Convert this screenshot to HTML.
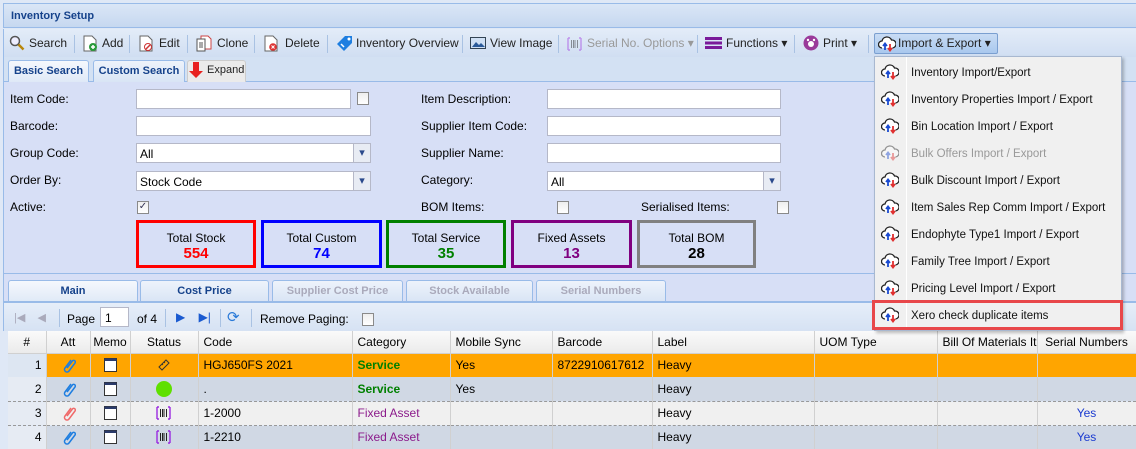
<!DOCTYPE html>
<html><head><meta charset="utf-8"><style>
*{box-sizing:border-box;margin:0;padding:0}
body{width:1136px;height:446px;overflow:hidden;background:#dfe8f6;font-family:"Liberation Sans",sans-serif;font-size:12px;color:#000;position:relative}
.a{position:absolute}
.title{left:3px;top:3px;width:1133px;height:25px;background:linear-gradient(#dae6f6,#c6d8f0);border:1px solid #99bbe8;border-right:none}
.title span{position:absolute;left:7px;top:6px;font-weight:bold;color:#15428b;font-size:11px}
.tb{left:3px;top:29px;width:1133px;height:28px;background:linear-gradient(#e3ecf8,#d0def2);border-left:1px solid #99bbe8}
.btn{position:absolute;top:36px;font-size:12px;color:#222;white-space:nowrap}
.sep{position:absolute;top:35px;width:1px;height:18px;background:#a9c2e3}
.tabs{left:3px;top:57px;width:1133px;height:25px;background:#d3e1f3;border-left:1px solid #99bbe8;border-bottom:1px solid #99bbe8}
.tab{position:absolute;height:22px;border:1px solid #99bbe8;border-bottom:none;border-radius:3px 3px 0 0;font-weight:bold;font-size:11px;color:#15428b;text-align:center;line-height:21px;background:linear-gradient(#eef3fb,#d9e5f5)}
.form{left:3px;top:82px;width:1133px;height:192px;background:#d7dff6;border-left:1px solid #99bbe8;border-bottom:1px solid #99bbe8}
.lbl{position:absolute;font-size:12px;color:#000}
.inp{position:absolute;height:20px;background:#fff;border:1px solid #b5b8c8;font-size:12px;padding:3px 3px}
.sel:after{content:"▾";position:absolute;right:0;top:0;width:16px;height:18px;background:#e8ecf4;border-left:1px solid #b5b8c8;color:#2a4a8c;font-size:11px;text-align:center;line-height:18px}
.cb{position:absolute;width:12px;height:13px;border:1px solid #8a8a8a;background:linear-gradient(#eee,#fff)}
.box{position:absolute;top:220px;height:48px;border:3px solid;background:#d7dff6;text-align:center;font-size:12px;padding-top:8px;line-height:15px}
.box b{display:block;font-size:15px;font-weight:bold}
.gtabs{left:3px;top:274px;width:1133px;height:28px;background:#d7dff6;border-left:1px solid #99bbe8}
.gt{position:absolute;top:280px;height:21px;border:1px solid #99bbe8;border-bottom:none;border-radius:3px 3px 0 0;font-weight:bold;font-size:11px;text-align:center;line-height:20px;background:linear-gradient(#eef3fb,#dae5f5);color:#15428b}
.pg{left:3px;top:301px;width:1133px;height:30px;background:linear-gradient(#e6eef9,#d6e2f3);border-left:1px solid #99bbe8;border-top:2px solid #99bbe8}
table{position:absolute;left:8px;top:331px;border-collapse:collapse;table-layout:fixed;width:1128px;font-size:12px}
th{height:22px;font-weight:normal;background:linear-gradient(#fafafa,#ebebeb);border-right:1px solid #d0d0d0;border-bottom:1px solid #d0d0d0;text-align:left;padding-left:5px;white-space:nowrap;overflow:hidden}
td{height:24px;border-right:1px solid #d0d0d0;padding-left:5px;white-space:nowrap;overflow:hidden}
tr.r1 td{background:#ffa500}
tr.r2 td{background:#d0d8e4}
tr.r3 td{background:#f0f0f0;border-top:1px dashed #999}
tr.r4 td{background:#d0d8e4;border-top:1px dashed #999}
td.n{text-align:right;padding-right:4px;background:#e6ebf3!important}
tr.r1 td.n{background:#dde6f2!important}
.c{text-align:center;padding-left:0}
.c svg{vertical-align:middle}
.svc{color:#008000;font-weight:bold}
.fa{color:#8b1a8b}
.menu{left:874px;top:56px;width:248px;height:275px;background:#f0f0f0;border:1px solid #a8b8d0;box-shadow:2px 2px 3px rgba(0,0,0,.25)}
.menu .ln{position:absolute;left:31px;top:0;width:1px;height:100%;background:#e0e0e0;border-right:1px solid #fff}
.mi{position:absolute;left:36px;font-size:11.5px;color:#111}
.mic{position:absolute;left:6px}
</style></head><body>
<svg width="0" height="0" style="position:absolute"><defs>
<g id="cl"><path d="M4 12a3.5 3.5 0 0 1 0-7a5 5 0 0 1 9.5-1a4 4 0 0 1 1 8" fill="#fff" stroke="#222" stroke-width="1.3"/><path d="M7 14V8M5 10l2-2.5L9 10" stroke="#1a4ad0" stroke-width="1.8" fill="none"/><path d="M12 8v6M10 12l2 2.5 2-2.5" stroke="#e03030" stroke-width="1.8" fill="none"/></g>
<g id="clip"><path d="M11 3L5 11a2.5 2.5 0 0 0 4 3l6-8a1.6 1.6 0 0 0-2.6-2L7 11" fill="none" stroke-width="1.5"/></g>
<g id="memo"><rect x="1.5" y="1.5" width="12" height="13" fill="#fff" stroke="#333"/><rect x="1.5" y="1.5" width="12" height="2.5" fill="#2a3a6a"/></g>
<g id="bar"><path d="M1 2v12M14 2v12M1 2h2M1 14h2M14 2h-2M14 14h-2" stroke="#9a2ae0" stroke-width="1.4" fill="none"/><path d="M4.5 4v8M6.5 4v8M8 4v8M10.5 4v8" stroke="#222"/></g>
</defs></svg>
<div class="a title"><span>Inventory Setup</span></div>
<div class="a tb"></div>
<svg class="a" style="left:9px;top:35px" width="16" height="16"><circle cx="6" cy="6" r="4.5" fill="#eef" stroke="#555" stroke-width="1.5"/><path d="M9.5 9.5l5 5" stroke="#b8860b" stroke-width="2.5"/></svg>
<div class="btn" style="left:29px">Search</div><div class="sep" style="left:74px"></div>
<svg class="a" style="left:82px;top:35px" width="16" height="17"><path d="M2 1h8l4 4v11H2z" fill="#fff" stroke="#666"/><circle cx="11" cy="12" r="4" fill="#2a9a3a"/><path d="M9 12h4M11 10v4" stroke="#fff" stroke-width="1.5"/></svg>
<div class="btn" style="left:102px">Add</div><div class="sep" style="left:129px"></div>
<svg class="a" style="left:138px;top:35px" width="16" height="17"><path d="M2 1h8l4 4v11H2z" fill="#fff" stroke="#666"/><circle cx="10" cy="12" r="3.5" fill="none" stroke="#c33"/><path d="M8 14l4-4" stroke="#c33" stroke-width="1.5"/></svg>
<div class="btn" style="left:159px">Edit</div><div class="sep" style="left:187px"></div>
<svg class="a" style="left:196px;top:35px" width="16" height="17"><path d="M5 1h7l3 3v10H5z" fill="#fff" stroke="#c44"/><path d="M1 4h8v12H1z" fill="#fff" stroke="#555"/><path d="M3 8h4M3 10h4M3 12h4" stroke="#555"/></svg>
<div class="btn" style="left:217px">Clone</div><div class="sep" style="left:254px"></div>
<svg class="a" style="left:263px;top:35px" width="16" height="17"><path d="M2 1h8l4 4v11H2z" fill="#fff" stroke="#666"/><circle cx="10" cy="12" r="3.8" fill="#d33"/><path d="M8.5 10.5l3 3M11.5 10.5l-3 3" stroke="#fff"/></svg>
<div class="btn" style="left:285px">Delete</div><div class="sep" style="left:327px"></div>
<svg class="a" style="left:336px;top:35px" width="17" height="17"><path d="M9 1h7v7L8 16 1 9z" fill="#1e7ee0"/><circle cx="13" cy="4" r="1.5" fill="#fff"/><path d="M5 9l3 3" stroke="#fff" stroke-width="1.5"/></svg>
<div class="btn" style="left:356px">Inventory Overview</div><div class="sep" style="left:462px"></div>
<svg class="a" style="left:470px;top:37px" width="17" height="13"><rect x=".5" y=".5" width="15" height="11" fill="#cfe0f5" stroke="#345"/><path d="M2 10l4-5 3 3 2-2 4 4z" fill="#2a5a9a"/></svg>
<div class="btn" style="left:490px">View Image</div><div class="sep" style="left:558px"></div>
<svg class="a" style="left:567px;top:36px" width="16" height="16" opacity=".45"><use href="#bar"/></svg>
<div class="btn" style="left:587px;color:#999">Serial No. Options ▾</div><div class="sep" style="left:697px"></div>
<svg class="a" style="left:705px;top:37px" width="17" height="12"><rect y="0" width="17" height="3" fill="#7a1a9a"/><rect y="4.5" width="17" height="3" fill="#7a1a9a"/><rect y="9" width="17" height="3" fill="#7a1a9a"/></svg>
<div class="btn" style="left:726px">Functions ▾</div><div class="sep" style="left:794px"></div>
<svg class="a" style="left:803px;top:35px" width="16" height="16"><circle cx="8" cy="8" r="7.5" fill="#9a3a9a"/><circle cx="8" cy="9" r="3" fill="#fff"/><circle cx="5" cy="5" r="1.2" fill="#fff"/><circle cx="11" cy="5" r="1.2" fill="#fff"/></svg>
<div class="btn" style="left:823px">Print ▾</div><div class="sep" style="left:868px"></div>
<div class="a" style="left:874px;top:33px;width:124px;height:21px;border:1px solid #7a9fd0;border-radius:2px;background:linear-gradient(#c8dcf4,#a9c8ee)"></div>
<svg class="a" style="left:878px;top:36px" width="18" height="16"><use href="#cl"/></svg>
<div class="btn" style="left:898px">Import &amp; Export ▾</div>

<div class="a tabs"></div>
<div class="tab" style="left:8px;top:60px;width:81px;background:linear-gradient(#f5f8fd,#dfe9f7)">Basic Search</div>
<div class="tab" style="left:93px;top:60px;width:92px">Custom Search</div>
<div class="tab" style="left:187px;top:60px;width:59px;background:#ebebeb;border-color:#ccc"></div>
<svg class="a" style="left:189px;top:61px" width="14" height="18"><path d="M4 1h6v9h4l-7 7-7-7h4z" fill="#e8211f"/></svg>
<div class="a" style="left:207px;top:64px;font-size:11px;color:#222">Expand</div>

<div class="a form"></div>
<div class="lbl" style="left:10px;top:92px">Item Code:</div>
<div class="inp" style="left:136px;top:89px;width:215px"></div><div class="cb" style="left:357px;top:92px"></div>
<div class="lbl" style="left:421px;top:92px">Item Description:</div><div class="inp" style="left:547px;top:89px;width:234px"></div>
<div class="lbl" style="left:10px;top:119px">Barcode:</div><div class="inp" style="left:136px;top:116px;width:235px"></div>
<div class="lbl" style="left:421px;top:119px">Supplier Item Code:</div><div class="inp" style="left:547px;top:116px;width:234px"></div>
<div class="lbl" style="left:10px;top:146px">Group Code:</div><div class="inp sel" style="left:136px;top:143px;width:235px">All</div>
<div class="lbl" style="left:421px;top:146px">Supplier Name:</div><div class="inp" style="left:547px;top:143px;width:234px"></div>
<div class="lbl" style="left:10px;top:173px">Order By:</div><div class="inp sel" style="left:136px;top:171px;width:235px">Stock Code</div>
<div class="lbl" style="left:421px;top:173px">Category:</div><div class="inp sel" style="left:547px;top:171px;width:234px">All</div>
<div class="lbl" style="left:10px;top:200px">Active:</div><div class="cb" style="left:137px;top:201px;font-size:10px;line-height:10px;color:#335;text-align:center">✓</div>
<div class="lbl" style="left:421px;top:200px">BOM Items:</div><div class="cb" style="left:557px;top:201px"></div>
<div class="lbl" style="left:641px;top:200px">Serialised Items:</div><div class="cb" style="left:777px;top:201px"></div>
<div class="box" style="left:136px;width:120px;border-color:#f00">Total Stock<b style="color:#f00">554</b></div>
<div class="box" style="left:261px;width:121px;border-color:#00f">Total Custom<b style="color:#00f">74</b></div>
<div class="box" style="left:386px;width:120px;border-color:#008000">Total Service<b style="color:#008000">35</b></div>
<div class="box" style="left:511px;width:121px;border-color:#800080">Fixed Assets<b style="color:#800080">13</b></div>
<div class="box" style="left:637px;width:119px;border-color:#808080">Total BOM<b style="color:#000">28</b></div>

<div class="a gtabs"></div>
<div class="gt" style="left:8px;width:130px;background:linear-gradient(#f5f8fd,#e0eaf7)">Main</div>
<div class="gt" style="left:140px;width:129px">Cost Price</div>
<div class="gt" style="left:272px;width:131px;color:#aab">Supplier Cost Price</div>
<div class="gt" style="left:406px;width:127px;color:#aab">Stock Available</div>
<div class="gt" style="left:536px;width:130px;color:#aab">Serial Numbers</div>
<div class="a pg"></div>
<div class="a" style="left:14px;top:311px;color:#aab;font-size:11px">|◀ &nbsp;&nbsp; ◀</div>
<div class="sep" style="left:59px;top:309px"></div>
<div class="lbl" style="left:67px;top:312px">Page</div>
<div class="inp" style="left:100px;top:307px;width:29px;padding:3px 4px">1</div>
<div class="lbl" style="left:137px;top:312px">of 4</div>
<div class="sep" style="left:165px;top:309px"></div>
<div class="a" style="left:176px;top:310px;color:#1a5ad0;font-size:12px">▶ &nbsp;&nbsp; ▶|</div>
<div class="sep" style="left:220px;top:309px"></div>
<div class="a" style="left:227px;top:308px;color:#2a7ad8;font-size:15px">⟳</div>
<div class="sep" style="left:251px;top:309px"></div>
<div class="lbl" style="left:260px;top:312px">Remove Paging:</div><div class="cb" style="left:362px;top:313px"></div>

<table>
<colgroup><col style="width:38px"><col style="width:44px"><col style="width:40px"><col style="width:68px"><col style="width:154px"><col style="width:98px"><col style="width:102px"><col style="width:100px"><col style="width:162px"><col style="width:123px"><col style="width:100px"><col style="width:99px"></colgroup>
<tr><th class="c">#</th><th class="c">Att</th><th class="c">Memo</th><th class="c">Status</th><th>Code</th><th>Category</th><th>Mobile Sync</th><th>Barcode</th><th>Label</th><th>UOM Type</th><th>Bill Of Materials Ite</th><th class="c">Serial Numbers</th></tr>
<tr class="r1"><td class="n">1</td><td class="c"><svg width="16" height="16" stroke="#1e7ee0"><use href="#clip"/></svg></td><td class="c"><svg width="15" height="16"><use href="#memo"/></svg></td><td class="c"><svg width="16" height="16"><path d="M3 10l7-7 3 3-7 7z" fill="none" stroke="#333"/><path d="M6 7l1 1M8 5l1 1" stroke="#333"/></svg></td><td>HGJ650FS 2021</td><td class="svc">Service</td><td>Yes</td><td>8722910617612</td><td>Heavy</td><td></td><td></td><td></td></tr>
<tr class="r2"><td class="n">2</td><td class="c"><svg width="16" height="16" stroke="#1e7ee0"><use href="#clip"/></svg></td><td class="c"><svg width="15" height="16"><use href="#memo"/></svg></td><td class="c"><span style="display:inline-block;width:16px;height:16px;border-radius:50%;background:#5fe000;vertical-align:middle"></span></td><td>.</td><td class="svc">Service</td><td>Yes</td><td></td><td>Heavy</td><td></td><td></td><td></td></tr>
<tr class="r3"><td class="n">3</td><td class="c"><svg width="16" height="16" stroke="#f06a6a"><use href="#clip"/></svg></td><td class="c"><svg width="15" height="16"><use href="#memo"/></svg></td><td class="c"><svg width="16" height="16"><use href="#bar"/></svg></td><td>1-2000</td><td class="fa">Fixed Asset</td><td></td><td></td><td>Heavy</td><td></td><td></td><td class="c" style="color:#1a3ad0">Yes</td></tr>
<tr class="r4"><td class="n">4</td><td class="c"><svg width="16" height="16" stroke="#1e7ee0"><use href="#clip"/></svg></td><td class="c"><svg width="15" height="16"><use href="#memo"/></svg></td><td class="c"><svg width="16" height="16"><use href="#bar"/></svg></td><td>1-2210</td><td class="fa">Fixed Asset</td><td></td><td></td><td>Heavy</td><td></td><td></td><td class="c" style="color:#1a3ad0">Yes</td></tr>
</table>

<div class="a menu"><div class="ln"></div>
<div class="mi" style="top:10px">Inventory Import/Export</div>
<div class="mi" style="top:37px">Inventory Properties Import / Export</div>
<div class="mi" style="top:64px">Bin Location Import / Export</div>
<div class="mi" style="top:91px;color:#999">Bulk Offers Import / Export</div>
<div class="mi" style="top:118px">Bulk Discount Import / Export</div>
<div class="mi" style="top:145px">Item Sales Rep Comm Import / Export</div>
<div class="mi" style="top:172px">Endophyte Type1 Import / Export</div>
<div class="mi" style="top:199px">Family Tree Import / Export</div>
<div class="mi" style="top:226px">Pricing Level Import / Export</div>
<div class="mi" style="top:253px">Xero check duplicate items</div>
<svg class="mic" style="top:7px" width="18" height="262">
<use href="#cl" y="0"/><use href="#cl" y="27"/><use href="#cl" y="54"/><use href="#cl" y="81" opacity=".45"/><use href="#cl" y="108"/><use href="#cl" y="135"/><use href="#cl" y="162"/><use href="#cl" y="189"/><use href="#cl" y="216"/><use href="#cl" y="243"/>
</svg>
</div>
<div class="a" style="left:872px;top:300px;width:251px;height:30px;border:3px solid #e8474a"></div>
</body></html>
